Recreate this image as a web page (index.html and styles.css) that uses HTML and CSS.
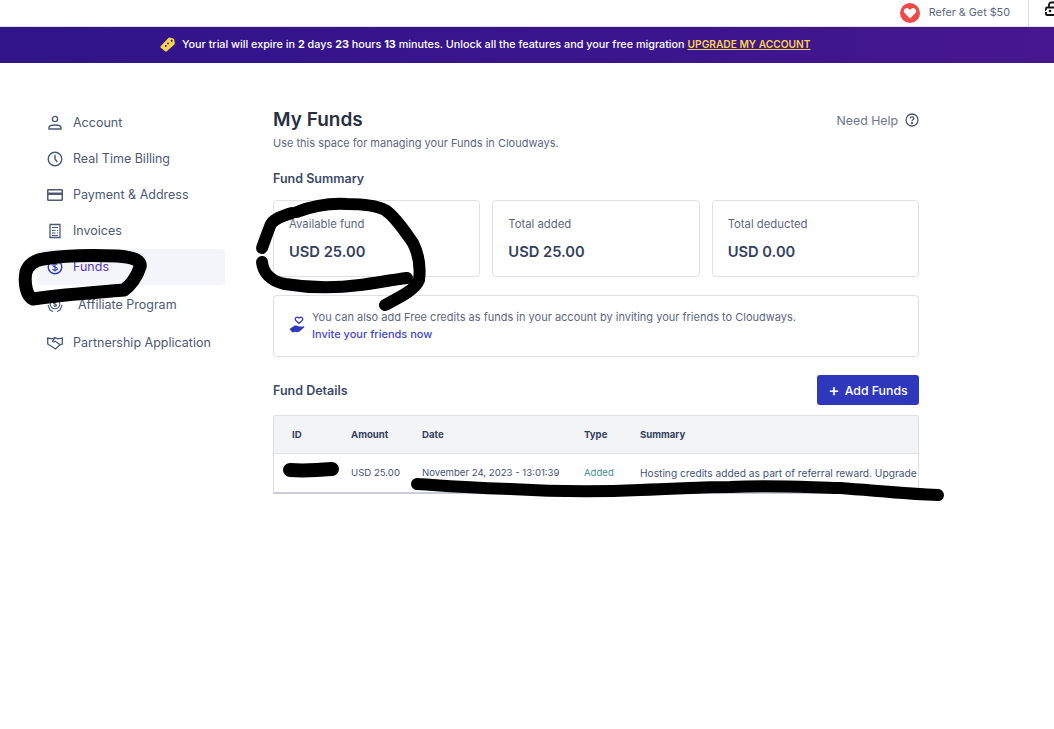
FILE: index.html
```html
<!DOCTYPE html>
<html lang="en">
<head>
    <meta charset="UTF-8">
    <meta name="viewport" content="width=device-width, initial-scale=1.0">
    <title>My Funds</title>
    <link rel="stylesheet" href="styles.css">
</head>
<body>

    <header class="topbar">
        <svg class="refer-icon" viewBox="0 0 20 20">
            <circle cx="10" cy="10" r="10" fill="#ef4a4a"/>
            <path d="M10 15.500 4.800 10.300a3 3 0 0 1 0-4.200 3 3 0 0 1 4.200 0l1 1 1-1a3 3 0 0 1 4.200 0 3 3 0 0 1 0 4.200z" fill="#fff"/>
        </svg>
        <span class="refer-text">Refer &amp; Get $50</span>
        <div class="topbar-end">
            <svg class="bot-icon" viewBox="0 0 9 16" fill="none" stroke="#111" stroke-width="1.800">
                <path d="M2 6.500h9v7.500H2C1.200 14 1 13.500 1 13V12H0M1 9H0M1 9V7.500C1 7 1.300 6.500 2 6.500"/>
                <path d="M4 6V3.500C4 2.500 5 1.500 6 1.500h5"/>
                <circle cx="5" cy="10" r="1.300" fill="#111" stroke="none"/>
            </svg>
        </div>
    </header>

    <div class="banner">
        <svg class="tag-icon" viewBox="0 0 15 15">
            <path d="M.6 9.300 8.400 1c.4-.4.800-.6 1.300-.5l3.500.9c.6.200.9.500 1 1.100l.6 3.600c.1.500 0 .9-.4 1.300L6.800 14.300c-.4.400-1 .4-1.400.1L.8 10.800c-.5-.4-.6-1-.2-1.500z" fill="#f9d34a"/>
            <circle cx="11.700" cy="3.800" r="1" fill="#3a158e"/>
            <circle cx="8" cy="6.500" r=".9" fill="#3a158e"/>
            <circle cx="5.800" cy="9" r=".9" fill="#3a158e"/>
        </svg>
        <span>Your trial will expire in <b>2</b> days <b>23</b> hours <b>13</b> minutes. Unlock all the features and your free migration</span>
        <a class="banner-link" href="#">UPGRADE MY ACCOUNT</a>
    </div>

    <div class="page">
        <nav class="sidebar">
            <a class="nav-item" href="#">
                <svg viewBox="0 0 16 16" fill="none" stroke="currentColor" stroke-width="1.400"><circle cx="8" cy="4" r="2.600"/><path d="M2 14v-1.600c0-1.400 1.600-2.400 6-2.400s6 1 6 2.400V14z"/></svg>
                <span>Account</span>
            </a>
            <a class="nav-item" href="#">
                <svg viewBox="0 0 16 16" fill="none" stroke="currentColor" stroke-width="1.400"><circle cx="8" cy="8" r="6.800"/><path d="M8 3.800V8l2.200 3"/></svg>
                <span>Real Time Billing</span>
            </a>
            <a class="nav-item" href="#">
                <svg viewBox="0 0 16 16"><path d="M0 3.200C0 2.500.5 2 1.200 2h13.600c.7 0 1.200.5 1.200 1.200v9.600c0 .7-.5 1.200-1.200 1.200H1.200C.5 14 0 13.500 0 12.800zM1.500 3.500V5.500h13V3.500zM1.500 8V12.500h13V8z" fill="currentColor" fill-rule="evenodd"/></svg>
                <span>Payment &amp; Address</span>
            </a>
            <a class="nav-item" href="#">
                <svg viewBox="0 0 16 16" fill="none" stroke="currentColor" stroke-width="1.300"><path d="M3 1.500h10v13H3z"/><path d="M5 4.500h6M5 7.500h3.500M10 7.500h1M5 10h3.500M10 10h1M5 12.500h6" stroke-width="1"/></svg>
                <span>Invoices</span>
            </a>
            <a class="nav-item nav-active" href="#">
                <svg viewBox="0 0 16 16" fill="none" stroke="currentColor" stroke-width="1.400"><circle cx="8" cy="8" r="6.800"/><path d="M10.200 5.800C9.800 5 9 4.700 8 4.700c-1.300 0-2.200.6-2.200 1.600 0 2.300 4.500 1.100 4.500 3.400 0 1-1 1.600-2.300 1.600-1.100 0-2-.4-2.400-1.200M8 3.500v9" stroke-width="1.100"/></svg>
                <span>Funds</span>
            </a>
            <a class="nav-item nav-affiliate" href="#">
                <svg viewBox="0 0 16 16" fill="none" stroke="currentColor" stroke-width="1.100"><circle cx="8" cy="7" r="4.800"/><path d="M9.500 5.500C9 5 8.600 4.800 8 4.800c-.9 0-1.500.5-1.500 1.100 0 1.500 3 .8 3 2.300 0 .6-.6 1.100-1.500 1.100-.7 0-1.200-.3-1.600-.8M8 4v6M1 8l2 5 3 1.500M15 8l-2 5-3 1.500"/></svg>
                <span>Affiliate Program</span>
            </a>
            <a class="nav-item nav-partner" href="#">
                <svg viewBox="0 0 16 16" fill="none" stroke="currentColor" stroke-width="1.300"><path d="M.7 3 5 3.800 8 2.800l3 1 4.300-.8V9l-2.300.8L8.500 14 2.800 10.300.7 9z"/><path d="M8 2.800 5.500 6.300c.8.800 1.800.8 2.800 0l4.700 3.500" stroke-width="1.200"/></svg>
                <span>Partnership Application</span>
            </a>
        </nav>

        <main class="content">
            <div class="title-row">
                <h1>My Funds</h1>
                <a class="help" href="#">
                    <span>Need Help</span>
                    <svg viewBox="0 0 14 14" fill="none" stroke="currentColor" stroke-width="1.300"><circle cx="7" cy="7" r="6"/><path d="M5.200 5.500C5.200 4.500 6 3.900 7 3.900s1.800.6 1.800 1.500c0 1.300-1.800 1.300-1.800 2.800"/><circle cx="7" cy="10.200" r=".5" fill="currentColor"/></svg>
                </a>
            </div>
            <p class="subtitle">Use this space for managing your Funds in Cloudways.</p>

            <h2 class="section-title">Fund Summary</h2>
            <div class="cards">
                <div class="card">
                    <div class="card-label">Available fund</div>
                    <div class="card-value">USD 25.00</div>
                </div>
                <div class="card">
                    <div class="card-label">Total added</div>
                    <div class="card-value">USD 25.00</div>
                </div>
                <div class="card">
                    <div class="card-label">Total deducted</div>
                    <div class="card-value">USD 0.00</div>
                </div>
            </div>

            <div class="invite">
                <svg viewBox="0 0 16 18">
                    <path d="M10 7.500 6.900 4.500a2 2 0 0 1 0-2.800 2 2 0 0 1 2.700 0l.4.400.4-.4a2 2 0 0 1 2.700 0 2 2 0 0 1 0 2.800z" fill="none" stroke="#2f38bd" stroke-width="1.200"/>
                    <path d="M.5 13 5 10c1.500-.8 3-.6 5 .4h2.300c.6 0 .8 1.100 0 1.300L9 12.200l5.300-2c1-.2 1.400.8.700 1.400L10.500 15.500c-1.500.8-3 .8-4.500.3l-2.500.8z" fill="#2f38bd"/>
                </svg>
                <div>
                    <div>You can also add Free credits as funds in your account by inviting your friends to Cloudways.</div>
                    <a class="invite-link" href="#">Invite your friends now</a>
                </div>
            </div>

            <div class="details-row">
                <h2 class="section-title">Fund Details</h2>
                <button class="add-button"><span class="plus">+</span>Add Funds</button>
            </div>

            <div class="table-wrap">
                <table class="funds-table">
                    <colgroup>
                        <col class="col-id"><col class="col-amount"><col class="col-date"><col class="col-type"><col>
                    </colgroup>
                    <thead>
                        <tr><th>ID</th><th>Amount</th><th>Date</th><th>Type</th><th>Summary</th></tr>
                    </thead>
                    <tbody>
                        <tr>
                            <td></td>
                            <td>USD 25.00</td>
                            <td>November 24, 2023 - 13:01:39</td>
                            <td class="type-added">Added</td>
                            <td class="summary-cell">Hosting credits added as part of referral reward. Upgrade</td>
                        </tr>
                    </tbody>
                </table>
            </div>
        </main>
    </div>

    <!-- marker scribbles drawn on top of the screenshot -->
    <svg class="scribbles" viewBox="0 0 1054 729" fill="none" stroke="#000" stroke-linecap="round" stroke-linejoin="round">
        <path stroke-width="13" d="M43 259C60 256 90 255 117 256C132 257 142 260 140 267C137 277 130 286 124 290C100 292 67 294 33 299C26 296 24 282 26 272C28 265 35 260 43 259Z"/>
        <path stroke-width="12" d="M292 213C282 216 274 219 271 224C268 231 265 240 262 248"/>
        <path stroke-width="12" d="M297 212C315 205 330 203 347 204C365 204 377 206 385 210C395 216 406 233 413 243C418 253 421 265 419 280C415 290 400 297 385 305"/>
        <path stroke-width="12" d="M262 262C263 272 270 281 285 284C315 289 345 287 360 285C375 283 392 280 407 278"/>
        <path stroke-width="14" d="M290 470C305 471 320 470 332 469"/>
        <path stroke-width="12" d="M417 484C450 486 475 488 510 489C560 492 600 492 640 490C680 489 700 487 730 487C770 485 800 487 840 488C880 491 910 494 938 495"/>
    </svg>

</body>
</html>
```

FILE: styles.css
```css
* {
    box-sizing: border-box;
}

body {
    margin: 0;
    height: 729px;
    overflow: hidden;
    position: relative;
    background: #fff;
    font-family: 'Inter', 'Liberation Sans', sans-serif;
    color: #3c4a68;
}

a {
    color: inherit;
    text-decoration: none;
}

.topbar {
    height: 27px;
    display: flex;
    align-items: center;
    justify-content: flex-end;
    border-bottom: 1px solid #dfe1e6;
    overflow: hidden;
}

.refer-icon {
    width: 20px;
    height: 20px;
    margin-right: 9px;
}

.refer-text {
    font-size: 10.800px;
    color: #5b6780;
    margin-right: 18px;
    padding-bottom: 2px;
}

.topbar-end {
    width: 26px;
    height: 26px;
    border-left: 1px solid #dfe1e6;
    padding: 1px 0 0 16px;
    overflow: hidden;
}

.bot-icon {
    display: block;
    width: 9px;
    height: 16px;
    overflow: visible;
}

.banner {
    height: 36px;
    display: flex;
    align-items: center;
    padding: 0 0 2px 160px;
    background: linear-gradient(90deg, #30148a, #3a158e 60%, #46178f);
    color: #fff;
    font-size: 10.800px;
    font-weight: 500;
}

.banner b {
    font-weight: 700;
}

.tag-icon {
    width: 15px;
    height: 15px;
    margin-right: 7px;
}

.banner-link {
    margin-left: 3px;
    color: #f9d34a;
    font-size: 10.200px;
    font-weight: 600;
    text-decoration: underline;
}

.page {
    display: flex;
    padding: 38px 0 0 37px;
}

.sidebar {
    width: 188px;
    margin-right: 48px;
    padding-top: 4px;
    font-size: 12.500px;
}

.nav-item {
    height: 36px;
    display: flex;
    align-items: center;
    gap: 10px;
    padding-left: 10px;
    border-radius: 4px;
    color: #4d5a75;
}

.nav-item span {
    padding-bottom: 2px;
}

.nav-item svg {
    width: 16px;
    height: 16px;
    flex: none;
}

.nav-active {
    background: #f4f5fb;
    color: #5a35c4;
}

.nav-active svg {
    color: #2f38bd;
}

.nav-affiliate {
    height: 38px;
    padding-top: 2px;
    gap: 15px;
}

.nav-partner {
    height: 37px;
    padding-top: 3px;
}

.content {
    width: 646px;
}

.title-row {
    display: flex;
    align-items: center;
    justify-content: space-between;
    height: 36px;
}

h1 {
    margin: 0;
    font-size: 19px;
    font-weight: 600;
    color: #27303f;
}

.help {
    display: flex;
    align-items: center;
    gap: 7px;
    margin-top: 2px;
    font-size: 12.300px;
    color: #6b7690;
}

.help svg {
    width: 14px;
    height: 14px;
    color: #4d5a75;
}

.subtitle {
    margin: -2px 0 0;
    font-size: 11px;
    line-height: 16px;
    color: #5b6780;
}

.section-title {
    margin: 0;
    font-size: 12.500px;
    font-weight: 600;
    color: #3c4a68;
}

.subtitle + .section-title {
    margin-top: 19px;
    line-height: 18px;
}

.cards {
    display: flex;
    gap: 12px;
    margin-top: 12px;
}

.card {
    flex: 1;
    height: 77px;
    padding: 16px 15px;
    border: 1px solid #dfe1e6;
    border-radius: 4px;
}

.card-label {
    font-size: 11.300px;
    line-height: 14px;
    color: #5b6780;
}

.card-value {
    margin-top: 11px;
    font-size: 14.700px;
    line-height: 20px;
    font-weight: 600;
    color: #33415f;
}

.invite {
    height: 62px;
    margin-top: 18px;
    display: flex;
    align-items: center;
    gap: 7px;
    padding: 0 15px;
    border: 1px solid #dfe1e6;
    border-radius: 4px;
    font-size: 11px;
    line-height: 17px;
    color: #5b6780;
}

.invite svg {
    width: 16px;
    height: 18px;
    flex: none;
    margin-bottom: 3px;
}

.invite-link {
    color: #3f48cc;
    font-weight: 500;
}

.details-row {
    display: flex;
    align-items: center;
    justify-content: space-between;
    margin-top: 18px;
}

.add-button {
    width: 102px;
    height: 30px;
    border: none;
    border-radius: 3px;
    background: #2f38bd;
    color: #fff;
    font-family: inherit;
    font-size: 12.300px;
    font-weight: 500;
}

.plus {
    font-size: 17px;
    line-height: 12px;
    margin-right: 5px;
    vertical-align: -1px;
}

.table-wrap {
    margin-top: 10px;
    border: 1px solid #dfe1e6;
    border-bottom: 2px solid #c9cdd6;
    border-radius: 3px 3px 0 0;
    overflow: hidden;
}

.funds-table {
    width: 100%;
    table-layout: fixed;
    border-collapse: collapse;
    font-size: 9.600px;
    white-space: nowrap;
}

.col-id { width: 59px; }
.col-amount { width: 71px; }
.col-date { width: 162px; }
.col-type { width: 56px; }

.funds-table th {
    height: 37px;
    padding: 0 0 0 18px;
    background: #f3f4f6;
    border-bottom: 1px solid #dfe1e6;
    text-align: left;
    font-weight: 700;
    color: #33415f;
}

.funds-table td {
    height: 39px;
    padding: 0 0 0 18px;
    color: #3f5478;
    overflow: hidden;
}

.funds-table .type-added {
    color: #3f8f8a;
}

.funds-table .summary-cell {
    padding-right: 0;
    font-size: 10.200px;
}

.scribbles {
    position: absolute;
    top: 0;
    left: 0;
    width: 1054px;
    height: 729px;
    pointer-events: none;
}
```
